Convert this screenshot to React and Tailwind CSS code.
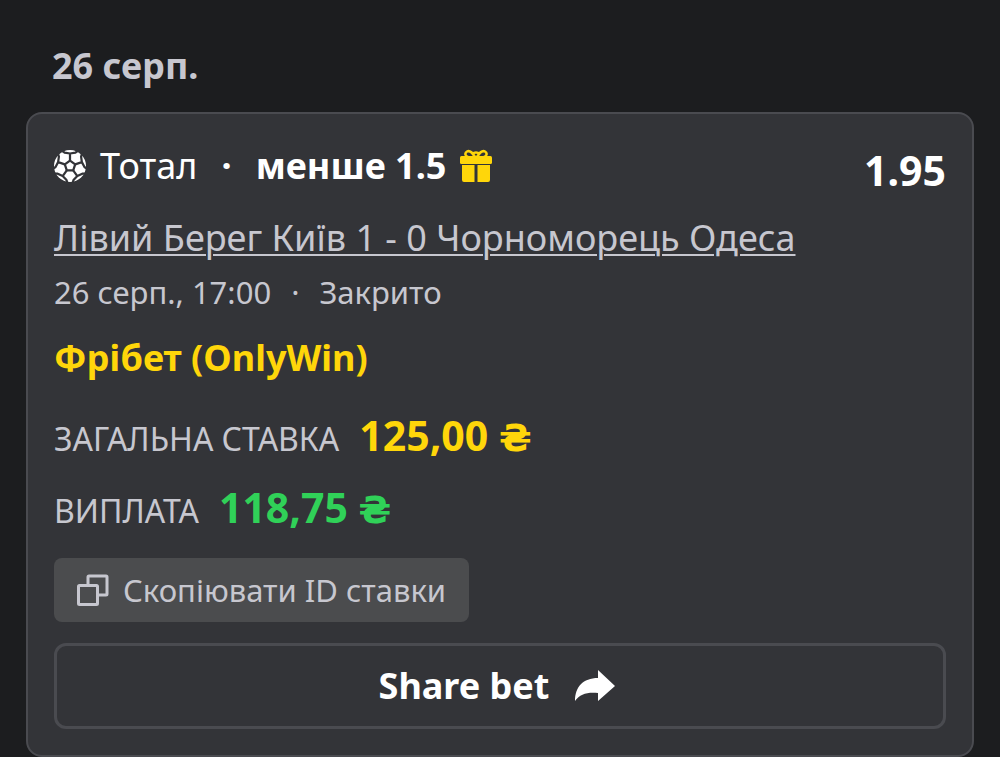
import React, { useState } from 'react'

const bet = {
  date: '26 серп.',
  market: 'Тотал',
  pick: 'менше 1.5',
  odds: '1.95',
  match: 'Лівий Берег Київ 1 - 0 Чорноморець Одеса',
  time: '26 серп., 17:00',
  status: 'Закрито',
  bonus: 'Фрібет (OnlyWin)',
  stake: '125,00',
  payout: '118,75',
  id: '26081700',
}

const BallIcon = () => (
  <svg className="w-8 h-[34px] shrink-0" viewBox="0 0 100 100" aria-hidden="true">
    <circle cx="50" cy="50" r="50" fill="#fff" />
    <g fill="none" stroke="#333438" strokeWidth="7" strokeLinejoin="round">
      <path d="M50 33 66.200 44.700 60 63.800 40 63.800 33.800 44.700z" />
      {[0, 72, 144, 216, 288].map((angle) => (
        <path key={angle} transform={`rotate(${angle} 50 50)`} d="M50 33V11M22 0 33 8 50 11 67 8 78 0" />
      ))}
    </g>
  </svg>
)

const GiftIcon = () => (
  <svg className="w-8 h-[34px] shrink-0" viewBox="0 0 32 34" aria-hidden="true">
    <g fill="#ffd60a">
      <rect x="0" y="7" width="32" height="8" rx="1.5" />
      <path d="M2 16h12.500V33H4a2 2 0 0 1-2-2zM17.500 16H30v15a2 2 0 0 1-2 2H17.500z" />
    </g>
    <path d="M15 8C12 3 9 1.5 7 2.5 4.500 4 5 7 8 8M17 8C20 3 23 1.500 25 2.500 27.500 4 27 7 24 8M12 5Q16 2 20 5" fill="none" stroke="#ffd60a" strokeWidth="2.500" />
  </svg>
)

const CopyIcon = () => (
  <svg className="w-8 h-8 shrink-0" viewBox="0 0 32 32" fill="none" stroke="currentColor" strokeWidth="3" strokeLinejoin="round" aria-hidden="true">
    <rect x="1.500" y="11.500" width="19" height="19" rx="1" />
    <path d="M11 11V3a1 1 0 0 1 1-1H29a1 1 0 0 1 1 1V20a1 1 0 0 1-1 1H21" />
  </svg>
)

const ShareIcon = () => (
  <svg className="w-10 h-8 shrink-0" viewBox="0 0 40 32" fill="currentColor" aria-hidden="true">
    <path d="M23 0 40 16 23 31V23C12 22 5 24 0 31 0 17 8 8 23 8z" />
  </svg>
)

const Hryvnia = () => <span className="font-['DejaVu_Sans',sans-serif] text-[38px] leading-none">₴</span>

const App = () => {
  const [copied, setCopied] = useState(false)

  const copyId = () => {
    navigator.clipboard?.writeText(bet.id)
    setCopied(true)
  }

  return (
    <div className="min-h-screen bg-[#1c1d1f] px-[26px] pt-10 font-['Noto_Sans','Open_Sans',sans-serif] text-[#c7c7cf]">
      <h1 className="px-[26px] text-[36px] leading-[52px] font-bold">{bet.date}</h1>

      <div className="mt-5 rounded-2xl border-2 border-[#4a4b50] bg-[#333438] px-[26px] pt-[22px] pb-[26px]">
        <div className="flex items-center justify-between text-white">
          <div className="flex items-center text-[36px] leading-[52px]">
            <BallIcon />
            <span className="ml-3.5">{bet.market}</span>
            <span className="mx-6 font-bold">·</span>
            <span className="mr-3.5 font-bold">{bet.pick}</span>
            <GiftIcon />
          </div>
          <span className="pt-2 text-[41px] leading-[52px] font-bold">{bet.odds}</span>
        </div>

        <a href="#match" className="mt-4 block text-[36px] leading-[52px] underline decoration-2 underline-offset-3">{bet.match}</a>

        <div className="mt-1.5 flex items-center text-[31px] leading-[44px]">
          <span>{bet.time}</span>
          <span className="mx-5">·</span>
          <span>{bet.status}</span>
        </div>

        <p className="mt-4.5 text-[36px] leading-[52px] font-bold text-[#ffd60a]">{bet.bonus}</p>

        <div className="mt-[25px] flex items-baseline leading-[52px]">
          <span className="mr-5 text-[32px]">ЗАГАЛЬНА СТАВКА</span>
          <span className="text-[41px] font-bold text-[#ffd60a]">{bet.stake} <Hryvnia /></span>
        </div>
        <div className="mt-4 flex items-baseline leading-[52px]">
          <span className="mr-5 text-[32px]">ВИПЛАТА</span>
          <span className="text-[41px] font-bold text-[#30d158]">{bet.payout} <Hryvnia /></span>
        </div>

        <button
          type="button"
          onClick={copyId}
          className="mt-[21px] flex h-16 items-center gap-3.5 rounded-lg bg-[#4b4c4e] px-[23px] text-[31px]"
        >
          <CopyIcon />
          {copied ? 'Скопійовано' : 'Скопіювати ID ставки'}
        </button>

        <button
          type="button"
          className="mt-[21px] flex h-[86px] w-full items-center justify-center gap-[26px] rounded-xl border-3 border-[#4a4b50] pr-1.5 text-[36px] font-bold text-white"
        >
          Share bet
          <ShareIcon />
        </button>
      </div>
    </div>
  )
}

export default App
